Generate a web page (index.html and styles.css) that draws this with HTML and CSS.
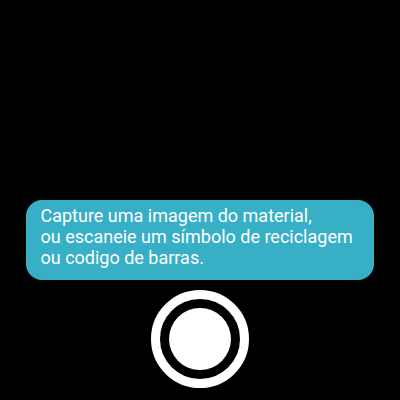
FILE: index.html
```html
<!DOCTYPE html>
<html>
<head>
<meta charset="utf-8">
<link rel="stylesheet" href="styles.css">
</head>
<body>
<div class="screen">
  <div class="hint">Capture uma imagem do material,<br>ou escaneie um símbolo de reciclagem<br>ou codigo de barras.</div>
  <div class="shutter"><div class="shutter-inner"></div></div>
</div>
</body>
</html>
```
FILE: styles.css
```css
html, body {
  margin: 0;
  padding: 0;
  background: #000;
}
.screen {
  width: 400px;
  height: 400px;
  display: flex;
  flex-direction: column;
  justify-content: flex-end;
  align-items: center;
  padding-bottom: 12px;
  box-sizing: border-box;
  gap: 10px;
}
.hint {
  width: 348px;
  box-sizing: border-box;
  background: #37afc7;
  color: #fff;
  font-family: Roboto, sans-serif;
  font-size: 18px;
  line-height: 21px;
  padding: 5px 15px 12px;
  border-radius: 16px;
  margin-left: -1px;
}
.shutter {
  width: 98px;
  height: 98px;
  box-sizing: border-box;
  border: 9px solid #fff;
  border-radius: 50%;
  display: flex;
  align-items: center;
  justify-content: center;
}
.shutter-inner {
  width: 62px;
  height: 62px;
  border-radius: 50%;
  background: #fff;
}
```
